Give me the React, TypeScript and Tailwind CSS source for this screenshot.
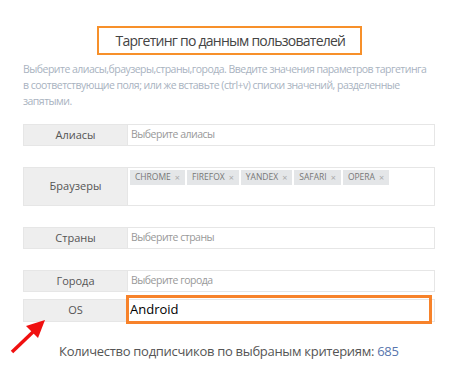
import React from "react";

const BROWSERS = ["CHROME", "FIREFOX", "YANDEX", "SAFARI", "OPERA"];

export default function App() {
  return (
    <div
      className="relative h-[387px] w-[457px] overflow-hidden bg-white"
      style={{ fontFamily: '"Open Sans", "Noto Sans", sans-serif' }}
    >
      <div className="flex w-[435px] flex-col pl-[23px]">
        {/* Title */}
        <div className="mt-[26px] flex justify-center">
          <div className="flex h-[29px] w-[265px] items-center whitespace-nowrap border-2 border-[#f7902a] pl-[17px] text-[14px] tracking-[-0.75px] text-[#444]">
            Таргетинг по данным пользователей
          </div>
        </div>

        <p className="mt-[6px] text-[10.5px] leading-[16px] tracking-[-0.52px] text-[#a9b3bf]">
          Выберите алиасы,браузеры,страны,города. Введите значения параметров таргетинга
          <br />
          в соответствующие поля; или же вставьте (ctrl+v) списки значений, разделенные
          <br />
          запятыми.
        </p>

        <div className="mt-[15px] flex flex-col">
          <Row label="Алиасы" placeholder="Выберите алиасы" />
          <div className="mt-[21px] flex h-[39px] border border-[#e6e6e6]">
            <Label text="Браузеры" />
            <div className="flex flex-1 items-start gap-[2px] bg-white pl-[2px] pt-[2px]">
              {BROWSERS.map((b) => (
                <span
                  key={b}
                  className="flex h-[15px] items-center gap-[4px] bg-[#e4e6e8] px-[5px] text-[8.5px] text-[#777]"
                >
                  {b}
                  <span className="text-[9px] text-[#aaa]">×</span>
                </span>
              ))}
            </div>
          </div>
          <div className="mt-[21px]">
            <Row label="Страны" placeholder="Выберите страны" />
          </div>
          <div className="mt-[21px]">
            <Row label="Города" placeholder="Выберите города" />
          </div>
          <div className="mt-[7px] flex h-[23px] border border-[#e6e6e6]">
            <Label text="OS" />
            <div className="relative flex-1 bg-white">
              <div className="absolute -top-[5px] -bottom-[3px] left-[-2px] right-[2px] flex items-center border-[3px] border-[#f7822a] pl-[1px] text-[13px] text-black">
                Android
              </div>
            </div>
          </div>
        </div>

        <div className="mt-[20px] pl-[36px] text-[13px] tracking-[-0.3px] text-[#555]">
          Количество подписчиков по выбраным критериям:{" "}
          <span className="text-[#5876ad]">685</span>
        </div>
      </div>

      {/* red arrow */}
      <svg
        className="absolute left-0 top-0"
        width="457"
        height="387"
        viewBox="0 0 457 387"
      >
        <line x1="12" y1="352" x2="34" y2="331" stroke="#f01010" strokeWidth="3.5" />
        <polygon points="45,320 26,326 38,338" fill="#f01010" />
      </svg>
    </div>
  );
}

function Row({ label, placeholder }: { label: string; placeholder: string }) {
  return (
    <div className="flex h-[22px] border border-[#e6e6e6]">
      <Label text={label} />
      <div className="flex flex-1 items-center bg-white pl-[3px] text-[10.5px] tracking-[-0.5px] text-[#999]">
        {placeholder}
      </div>
    </div>
  );
}

function Label({ text }: { text: string }) {
  return (
    <div className="flex w-[104px] shrink-0 items-center justify-center border-r border-[#e6e6e6] bg-[#eeeeee] text-[11px] text-[#555]">
      {text}
    </div>
  );
}
